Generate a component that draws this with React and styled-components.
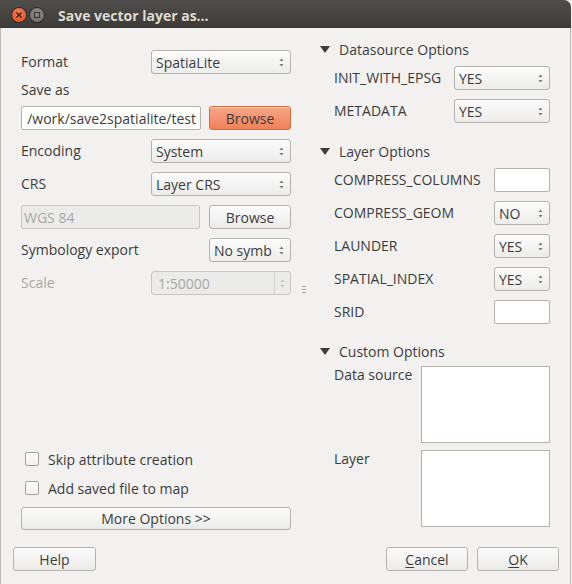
import styled, { createGlobalStyle } from 'styled-components'

const GlobalStyle = createGlobalStyle`
  html, body {
    margin: 0;
    padding: 0;
    background: #f2f1f0;
  }
  body {
    font-family: 'Open Sans', 'DejaVu Sans', sans-serif;
    font-size: 14px;
    color: #3c3c3c;
  }
`

const Window = styled.div`
  width: 572px;
  height: 584px;
  display: flex;
  flex-direction: column;
  background: #f2f1f0;
  overflow: hidden;
`

const TitleBar = styled.div`
  height: 28px;
  flex: none;
  display: flex;
  align-items: center;
  padding-left: 12px;
  padding-top: 2px;
  box-sizing: border-box;
  background: linear-gradient(#4f4e4a, #3c3b37);
  border-radius: 0 7px 0 0;
  margin-right: 1px;
`

const WinButton = styled.div`
  width: 14px;
  height: 14px;
  border-radius: 50%;
  margin-right: 4px;
  display: flex;
  align-items: center;
  justify-content: center;
  background: ${(p) =>
    p.$close
      ? 'radial-gradient(circle at 50% 35%, #f4815a, #dd4a1f)'
      : 'radial-gradient(circle at 50% 35%, #8f8e89, #6a6965)'};
  box-shadow: 0 0 0 1px rgba(0, 0, 0, 0.35);
`

const Title = styled.div`
  margin-left: 10px;
  font-weight: bold;
  font-size: 14px;
  color: #dfdbd2;
`

const Body = styled.div`
  flex: 1;
  display: flex;
  flex-direction: column;
  border-left: 1px solid #b8b6b2;
  border-right: 1px solid #b8b6b2;
  margin-right: 1px;
`

const Main = styled.div`
  display: flex;
  padding: 12px 20px 0 20px;
  height: 490px;
`

const LeftPane = styled.div`
  width: 270px;
  display: flex;
  flex-direction: column;
  gap: 9px;
  padding-top: 10px;
`

const Splitter = styled.div`
  width: 25px;
  display: flex;
  flex-direction: column;
  align-items: center;
  justify-content: center;
  gap: 2px;
  padding-left: 1px;
  padding-top: 8px;
  box-sizing: border-box;

  span {
    width: 4px;
    height: 1px;
    background: #a9a7a3;
  }
`

const RightPane = styled.div`
  flex: 1;
  display: flex;
  flex-direction: column;
`

const Row = styled.div`
  display: grid;
  grid-template-columns: ${(p) => p.$cols};
  column-gap: ${(p) => p.$gap || 0}px;
  align-items: center;
  height: 24px;
`

const Label = styled.div`
  color: ${(p) => (p.$disabled ? '#a8a7a5' : '#3c3c3c')};
  white-space: nowrap;
  line-height: 14px;
  padding-top: ${(p) => p.$pt || 0}px;
`

const LabelRow = styled.div`
  height: 14px;
  display: flex;
  align-items: center;
`

const ComboBox = styled.div`
  height: 24px;
  min-width: 0;
  box-sizing: border-box;
  border: 1px solid #b5b2ae;
  border-radius: 3px;
  background: linear-gradient(#fbfbfb, #ececeb);
  display: flex;
  align-items: center;
  padding: 0 5px 0 4px;
  color: #3c3c3c;
  box-shadow: inset 0 1px 0 #ffffff;

  span {
    flex: 1;
    min-width: 0;
    white-space: nowrap;
    overflow: hidden;
  }
`

const LineEdit = styled.div`
  height: ${(p) => p.$h || 24}px;
  box-sizing: border-box;
  border: 1px solid ${(p) => (p.$disabled ? '#c9c7c4' : '#b5b2ae')};
  border-radius: 2px;
  background: ${(p) => (p.$disabled ? '#ebebea' : '#ffffff')};
  color: ${(p) => (p.$disabled ? '#a8a7a5' : '#3c3c3c')};
  display: flex;
  align-items: center;
  justify-content: ${(p) => (p.$end ? 'flex-end' : 'flex-start')};
  padding: 0 4px 0 2px;
  overflow: hidden;
  white-space: nowrap;
`

const Button = styled.div`
  height: ${(p) => p.$h || 24}px;
  box-sizing: border-box;
  border: 1px solid ${(p) => (p.$accent ? '#d86a44' : '#b5b2ae')};
  border-radius: 3px;
  background: ${(p) =>
    p.$accent
      ? 'linear-gradient(#f7a688, #f08159)'
      : 'linear-gradient(#fbfbfb, #ebebea)'};
  display: flex;
  align-items: center;
  justify-content: center;
  color: #3c3c3c;
  width: ${(p) => (p.$w ? `${p.$w}px` : 'auto')};
  box-shadow: inset 0 1px 0 rgba(255, 255, 255, 0.6);

  u {
    text-decoration: underline;
    text-underline-offset: 2px;
  }
`

const SpinBox = styled.div`
  height: 24px;
  box-sizing: border-box;
  border: 1px solid #cac8c5;
  border-radius: 3px;
  background: #ebebea;
  display: flex;
  color: #a8a7a5;

  span {
    flex: 1;
    display: flex;
    align-items: center;
    padding-left: 6px;
  }
`

const SpinButtons = styled.div`
  width: 15px;
  border-left: 1px solid #d6d4d1;
  display: flex;
  align-items: center;
  justify-content: center;
`

const Spacer = styled.div`
  flex: 1;
`

const CheckRow = styled.label`
  display: flex;
  align-items: center;
  height: 20px;
  gap: 9px;
  padding-left: 4px;
  padding-top: ${(p) => p.$pt || 0}px;
`

const CheckBox = styled.span`
  width: 12px;
  height: 12px;
  border: 1px solid #a5a29e;
  border-radius: 2px;
  background: linear-gradient(#ffffff, #f1f0ef);
`

const GroupHeader = styled.div`
  display: flex;
  align-items: center;
  height: 18px;
  gap: 9px;
  padding-left: 4px;
  margin-top: ${(p) => p.$mt || 0}px;
  margin-bottom: ${(p) => p.$mb || 8}px;
`

const Group = styled.div`
  display: flex;
  flex-direction: column;
  gap: ${(p) => p.$gap || 9}px;
  padding-left: 18px;
`

const TextAreaRow = styled.div`
  display: grid;
  grid-template-columns: 87px 1fr;
  align-items: start;
`

const TextBox = styled.div`
  height: 77px;
  box-sizing: border-box;
  border: 1px solid #b5b2ae;
  background: #ffffff;
`

const Footer = styled.div`
  display: flex;
  align-items: center;
  padding: 17px 11px 0 12px;
  gap: 9px;
`

function Arrows({ color = '#7b7975' }) {
  return (
    <svg width="7" height="13" viewBox="0 0 7 13">
      <path d="M3.5 2.5 L5.5 5 L1.5 5 Z" fill={color} />
      <path d="M3.5 10.5 L5.5 8 L1.5 8 Z" fill={color} />
    </svg>
  )
}

function Combo({ value }) {
  return (
    <ComboBox>
      <span>{value}</span>
      <Arrows />
    </ComboBox>
  )
}

function Header({ children, mt, mb }) {
  return (
    <GroupHeader $mt={mt} $mb={mb}>
      <svg width="10" height="7" viewBox="0 0 10 7">
        <path d="M0 0 L10 0 L5 7 Z" fill="#3c3c3c" />
      </svg>
      <span>{children}</span>
    </GroupHeader>
  )
}

export default function App() {
  return (
    <Window>
      <GlobalStyle />
      <TitleBar>
        <WinButton $close>
          <svg width="8" height="8" viewBox="0 0 8 8">
            <path d="M1.5 1.5 L6.5 6.5 M6.5 1.5 L1.5 6.5" stroke="#3a1a10" strokeWidth="1.4" />
          </svg>
        </WinButton>
        <WinButton>
          <svg width="8" height="8" viewBox="0 0 8 8">
            <rect x="1.5" y="1.5" width="5" height="5" fill="none" stroke="#3b3a37" strokeWidth="1.2" />
          </svg>
        </WinButton>
        <Title>Save vector layer as...</Title>
      </TitleBar>
      <Body>
        <Main>
          <LeftPane>
            <Row $cols="130px minmax(0, 1fr)">
              <Label>Format</Label>
              <Combo value="SpatiaLite" />
            </Row>
            <LabelRow>
              <Label>Save as</Label>
            </LabelRow>
            <Row $cols="180px 1fr" $gap={8}>
              <LineEdit $end>/work/save2spatialite/test</LineEdit>
              <Button $accent>Browse</Button>
            </Row>
            <Row $cols="130px minmax(0, 1fr)">
              <Label>Encoding</Label>
              <Combo value="System" />
            </Row>
            <Row $cols="130px minmax(0, 1fr)">
              <Label>CRS</Label>
              <Combo value="Layer CRS" />
            </Row>
            <Row $cols="179px 1fr" $gap={9}>
              <LineEdit $disabled>WGS 84</LineEdit>
              <Button>Browse</Button>
            </Row>
            <Row $cols="188px minmax(0, 1fr)">
              <Label>Symbology export</Label>
              <Combo value="No symb" />
            </Row>
            <Row $cols="130px minmax(0, 1fr)">
              <Label $disabled>Scale</Label>
              <SpinBox>
                <span>1:50000</span>
                <SpinButtons>
                  <Arrows color="#c2c0bd" />
                </SpinButtons>
              </SpinBox>
            </Row>
            <Spacer />
            <CheckRow $pt={1}>
              <CheckBox />
              Skip attribute creation
            </CheckRow>
            <CheckRow>
              <CheckBox />
              Add saved file to map
            </CheckRow>
            <Button $h={23}>More Options &gt;&gt;</Button>
          </LeftPane>
          <Splitter>
            <span />
            <span />
            <span />
          </Splitter>
          <RightPane>
            <Header>Datasource Options</Header>
            <Group>
              <Row $cols="120px minmax(0, 1fr)">
                <Label>INIT_WITH_EPSG</Label>
                <Combo value="YES" />
              </Row>
              <Row $cols="120px minmax(0, 1fr)">
                <Label>METADATA</Label>
                <Combo value="YES" />
              </Row>
            </Group>
            <Header mt={19}>Layer Options</Header>
            <Group>
              <Row $cols="160px minmax(0, 1fr)">
                <Label>COMPRESS_COLUMNS</Label>
                <LineEdit />
              </Row>
              <Row $cols="160px minmax(0, 1fr)">
                <Label>COMPRESS_GEOM</Label>
                <Combo value="NO" />
              </Row>
              <Row $cols="160px minmax(0, 1fr)">
                <Label>LAUNDER</Label>
                <Combo value="YES" />
              </Row>
              <Row $cols="160px minmax(0, 1fr)">
                <Label>SPATIAL_INDEX</Label>
                <Combo value="YES" />
              </Row>
              <Row $cols="160px minmax(0, 1fr)">
                <Label>SRID</Label>
                <LineEdit />
              </Row>
            </Group>
            <Header mt={18} mb={6}>Custom Options</Header>
            <Group $gap={7}>
              <TextAreaRow>
                <Label $pt={2}>Data source</Label>
                <TextBox />
              </TextAreaRow>
              <TextAreaRow>
                <Label $pt={2}>Layer</Label>
                <TextBox />
              </TextAreaRow>
            </Group>
          </RightPane>
        </Main>
        <Footer>
          <Button $w={83}>Help</Button>
          <Spacer />
          <Button $w={82}>
            <span><u>C</u>ancel</span>
          </Button>
          <Button $w={82}>
            <span><u>O</u>K</span>
          </Button>
        </Footer>
      </Body>
    </Window>
  )
}
